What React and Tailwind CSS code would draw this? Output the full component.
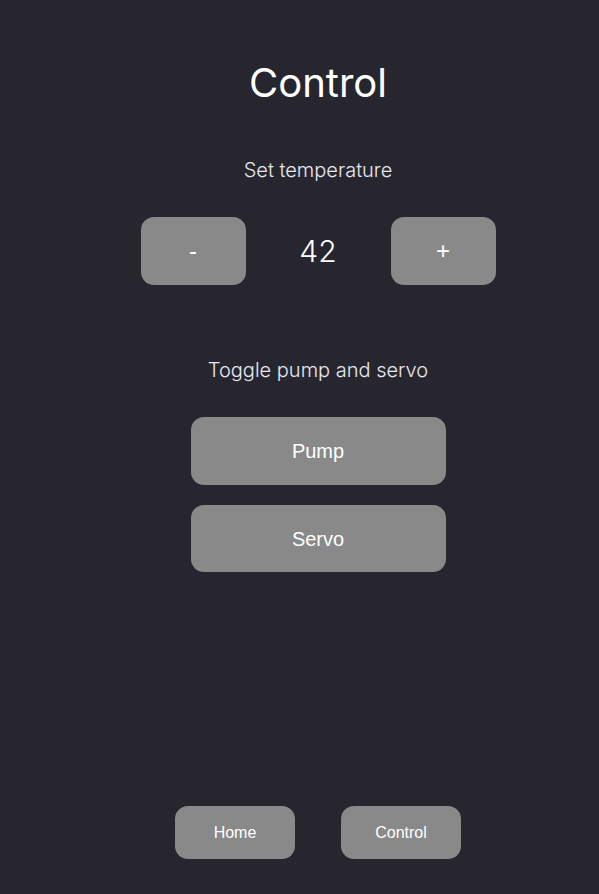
export default function App() {
  const inter = { fontFamily: "Inter, 'Noto Sans', sans-serif" };
  const arial = { fontFamily: "'Liberation Sans', Arial, sans-serif" };
  return (
    <div className="w-full h-[894px] bg-[#27262f] text-white pl-[37px] flex flex-col items-center" style={inter}>
      <h1 className="mt-[57px] text-[40px] leading-[52px] font-normal">Control</h1>
      <p className="mt-[48px] text-[20px] leading-[26px] font-light text-[#e8e8f0]">Set temperature</p>
      <div className="mt-[34px] flex items-center">
        <button className="w-[105px] h-[68px] rounded-[13px] bg-[#898989] text-[24px] text-white" style={arial}>-</button>
        <span className="w-[145px] text-center text-[30px] font-light">42</span>
        <button className="w-[105px] h-[68px] rounded-[13px] bg-[#898989] text-[24px] text-white" style={arial}>+</button>
      </div>
      <p className="mt-[72px] text-[20px] leading-[26px] font-light text-[#e8e8f0]">Toggle pump and servo</p>
      <div className="mt-[34px] flex flex-col gap-[20px]">
        <button className="w-[255px] h-[68px] rounded-[13px] bg-[#898989] text-[20px] text-white" style={arial}>Pump</button>
        <button className="w-[255px] h-[67px] rounded-[13px] bg-[#898989] text-[20px] text-white" style={arial}>Servo</button>
      </div>
      <div className="mt-auto mb-[35px] flex gap-[46px]">
        <button className="w-[120px] h-[53px] rounded-[13px] bg-[#898989] text-[16px] text-white" style={arial}>Home</button>
        <button className="w-[120px] h-[53px] rounded-[13px] bg-[#898989] text-[16px] text-white" style={arial}>Control</button>
      </div>
    </div>
  );
}
